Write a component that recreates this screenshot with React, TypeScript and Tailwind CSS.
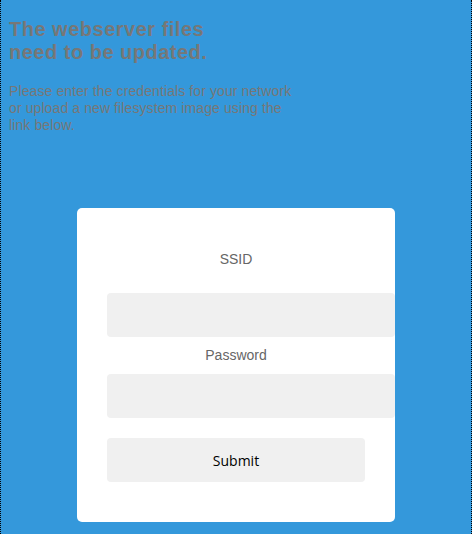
import React from "react";

export default function App() {
  return (
    <div
      className="min-h-screen w-full bg-[#3498db] border-x border-dotted border-black"
      style={{ fontFamily: '"Liberation Sans", Arial, sans-serif' }}
    >
      <div className="pl-2 pt-[18px]">
        <h1 className="text-[20px] leading-[23px] font-bold text-[#777777] tracking-[0.5px]">
          The webserver files
          <br />
          need to be updated.
        </h1>
        <p className="mt-[19px] w-[296px] text-[14px] leading-[17px] text-[#777777] tracking-[0.1px]">
          Please enter the credentials for your network or upload a new filesystem image using the link below.
        </p>
      </div>
      <div className="flex justify-center mt-[74px]">
        <form
          className="w-[318px] bg-white rounded-[5px] pt-[43px] pb-[40px] flex flex-col"
          onSubmit={(e) => e.preventDefault()}
        >
          <label className="text-center text-[14px] leading-[17px] text-[#666666]">SSID</label>
          <input
            type="text"
            className="mt-[25px] ml-[30px] w-[288px] h-[44px] bg-[#f0f0f0] rounded-[4px] outline-none"
          />
          <label className="mt-[10px] text-center text-[14px] leading-[17px] text-[#666666]">Password</label>
          <input
            type="password"
            className="mt-[10px] ml-[30px] w-[288px] h-[44px] bg-[#f0f0f0] rounded-[4px] outline-none"
          />
          <button
            type="submit"
            className="mt-[20px] ml-[30px] w-[258px] h-[44px] bg-[#f0f0f0] rounded-[4px] text-[14px] text-black"
            style={{ fontFamily: '"Open Sans", "Noto Sans", sans-serif' }}
          >
            Submit
          </button>
        </form>
      </div>
    </div>
  );
}
